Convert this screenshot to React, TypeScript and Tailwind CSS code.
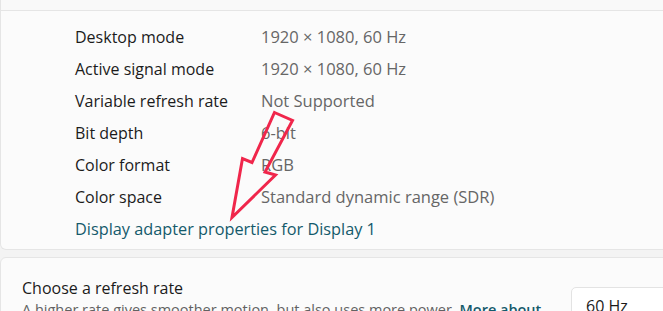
import React from "react";

const rows = [
  { label: "Desktop mode", value: "1920 × 1080, 60 Hz" },
  { label: "Active signal mode", value: "1920 × 1080, 60 Hz" },
  { label: "Variable refresh rate", value: "Not Supported" },
  { label: "Bit depth", value: "6-bit" },
  { label: "Color format", value: "RGB" },
  { label: "Color space", value: "Standard dynamic range (SDR)" },
];

function Arrow() {
  // hand-drawn red callout arrow over the rows
  return (
    <svg
      className="absolute left-0 top-0 pointer-events-none"
      width="663"
      height="311"
      viewBox="0 0 663 311"
    >
      <polygon
        points="274.5,112.5 292.5,120.5 265,172 275.5,175 232,217.5 242.5,158.5 252,162.5"
        fill="none"
        stroke="#f0264b"
        strokeWidth="3"
        strokeLinejoin="miter"
      />
    </svg>
  );
}

export default function App() {
  return (
    <div
      className="relative w-[663px] h-[311px] overflow-hidden bg-[#f3f3f3] text-[#1b1b1b]"
      style={{ fontFamily: '"Open Sans", "Noto Sans", sans-serif' }}
    >
      <div className="flex flex-col gap-[7px] w-[700px]">
        {/* Display information expander */}
        <div className="bg-[#fbfbfb] border border-t-0 border-[#e5e5e5] rounded-b-[6px]">
          <div className="h-[11px] bg-[#f9f9f9] border-b border-[#e5e5e5]" />
          <div className="pl-[74px] pt-[10px] pb-[4px] text-[16px]">
            {rows.map((r) => (
              <div key={r.label} className="flex items-center h-[32px]">
                <div className="w-[186px]">{r.label}</div>
                <div className="text-[16.5px] text-[#666666]">{r.value}</div>
              </div>
            ))}
            <div className="flex items-center h-[32px] text-[16.3px] text-[#145a6b]">
              Display adapter properties for Display 1
            </div>
          </div>
        </div>

        {/* Refresh rate card */}
        <div className="bg-[#fbfbfb] border border-[#e5e5e5] rounded-t-[6px] h-[80px] flex pl-[21px] pt-[19px]">
          <div className="w-[549px]">
            <div className="text-[16px] leading-[23px]">Choose a refresh rate</div>
            <div className="text-[14.5px] leading-[19px] text-[#626262] whitespace-nowrap">
              A higher rate gives smoother motion, but also uses more power.{" "}
              <span className="font-semibold text-[#145a6b]">More about</span>
            </div>
          </div>
          <div className="mt-[10px] h-[36px] w-[120px] bg-white border border-[#e3e3e3] rounded-[5px] pl-[14px] pt-[6px] text-[16px]">
            60 Hz
          </div>
        </div>
      </div>
      <Arrow />
    </div>
  );
}
